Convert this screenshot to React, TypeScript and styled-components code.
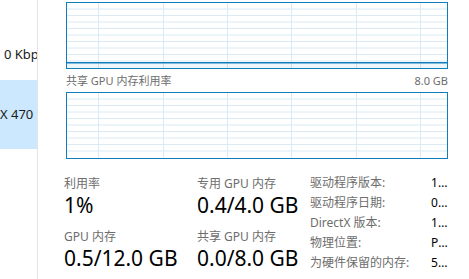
import React, { FunctionComponent } from 'react'
import styled, { createGlobalStyle } from 'styled-components'

const GlobalStyle = createGlobalStyle`
  html, body {
    margin: 0;
    padding: 0;
    background: #ffffff;
    overflow: hidden;
  }
  body {
    font-family: "Noto Sans", "Noto Sans CJK SC", sans-serif;
  }
`

const blue = '#117dbb'
const gridLine = '#d9eaf4'
const labelGrey = '#6d6d6d'

const Page = styled.div`
  display: flex;
  width: 469px;
  height: 279px;
  overflow: hidden;
`

const Sidebar = styled.div`
  width: 37px;
  flex-shrink: 0;
  border-right: 1px solid #e3e3e3;
  display: flex;
  flex-direction: column;
  overflow: hidden;
`

const SideItem = styled.div<{ $selected?: boolean; $height: number; $textTop: number }>`
  height: ${(p) => p.$height}px;
  padding-top: ${(p) => p.$textTop}px;
  padding-left: ${(p) => (p.$selected ? 0 : 4)}px;
  box-sizing: border-box;
  background: ${(p) => (p.$selected ? '#cce8ff' : 'transparent')};
  font-size: 13px;
  line-height: 16px;
  color: #1a1a1a;
  white-space: nowrap;
  overflow: hidden;
`

const Main = styled.div`
  flex: 1;
  padding: 2px 0 0 28px;
  display: flex;
  flex-direction: column;
`

const GraphBox = styled.div`
  width: 380px;
  height: 65px;
  border: 1px solid ${blue};
`

const GraphCaption = styled.div`
  width: 382px;
  display: flex;
  justify-content: space-between;
  font-size: 11px;
  line-height: 14px;
  color: ${labelGrey};
  margin: 5px 0 4px;
`

const Stats = styled.div`
  display: grid;
  grid-template-columns: 133px 113px auto;
  margin-top: 17px;
  margin-left: -2px;
`

const StatColumn = styled.div`
  display: flex;
  flex-direction: column;
`

const StatLabel = styled.div`
  font-size: 12px;
  line-height: 16px;
  color: ${labelGrey};
  white-space: nowrap;
`

const StatValue = styled.div`
  font-size: 21px;
  line-height: 24px;
  color: #000;
  margin: 1px 0 12px;
  white-space: nowrap;
`

const InfoTable = styled.div`
  display: grid;
  grid-template-columns: 121px 18px;
  grid-auto-rows: 20px;
  margin-top: -3px;
`

const InfoLabel = styled.div`
  font-size: 12px;
  line-height: 20px;
  color: ${labelGrey};
  white-space: nowrap;
`

const InfoValue = styled.div`
  font-size: 12px;
  line-height: 20px;
  color: #000;
  white-space: nowrap;
  overflow: hidden;
  text-overflow: ellipsis;
`

interface GraphProps {
  usage: number
}

const W = 380
const H = 65
const verticals = [31, 96, 160, 224, 289, 353]

const Graph: FunctionComponent<GraphProps> = ({ usage }) => {
  const y = H - usage * H
  return (
    <GraphBox>
      <svg width={W} height={H} style={{ display: 'block' }}>
        {Array.from({ length: 9 }, (_, i) => (
          <line key={`h${i}`} x1={0} x2={W} y1={(i + 1) * 6.5 - 0.5} y2={(i + 1) * 6.5 - 0.5} stroke={gridLine} strokeWidth={1} />
        ))}
        {verticals.map((x) => (
          <line key={`v${x}`} x1={x + 0.5} x2={x + 0.5} y1={0} y2={H} stroke={gridLine} strokeWidth={1} />
        ))}
        {usage > 0 && (
          <>
            <rect x={0} y={y} width={W} height={H - y} fill="rgba(17,125,187,0.07)" />
            <line x1={0} x2={W} y1={y + 0.5} y2={y + 0.5} stroke={blue} strokeWidth={1.5} />
          </>
        )}
      </svg>
    </GraphBox>
  )
}

const info = [
  ['驱动程序版本:', '1.0.30.1024'],
  ['驱动程序日期:', '09/25/2020'],
  ['DirectX 版本:', '12 (FL 12.0)'],
  ['物理位置:', 'PCI 总线 1、设备 0、功能 0'],
  ['为硬件保留的内存:', '59.5 MB'],
]

const App: FunctionComponent = () => {
  return (
    <>
      <GlobalStyle />
      <Page>
        <Sidebar>
          <SideItem $height={80} $textTop={46}>
            0 Kbps
          </SideItem>
          <SideItem $selected $height={69} $textTop={26}>
            X 470 Series
          </SideItem>
        </Sidebar>
        <Main>
          <Graph usage={0.09} />
          <GraphCaption>
            <span>共享 GPU 内存利用率</span>
            <span>8.0 GB</span>
          </GraphCaption>
          <Graph usage={0} />
          <Stats>
            <StatColumn>
              <StatLabel>利用率</StatLabel>
              <StatValue>1%</StatValue>
              <StatLabel>GPU 内存</StatLabel>
              <StatValue>0.5/12.0 GB</StatValue>
            </StatColumn>
            <StatColumn>
              <StatLabel>专用 GPU 内存</StatLabel>
              <StatValue>0.4/4.0 GB</StatValue>
              <StatLabel>共享 GPU 内存</StatLabel>
              <StatValue>0.0/8.0 GB</StatValue>
            </StatColumn>
            <InfoTable>
              {info.map(([label, value]) => (
                <React.Fragment key={label}>
                  <InfoLabel>{label}</InfoLabel>
                  <InfoValue>{value}</InfoValue>
                </React.Fragment>
              ))}
            </InfoTable>
          </Stats>
        </Main>
      </Page>
    </>
  )
}

export default App
